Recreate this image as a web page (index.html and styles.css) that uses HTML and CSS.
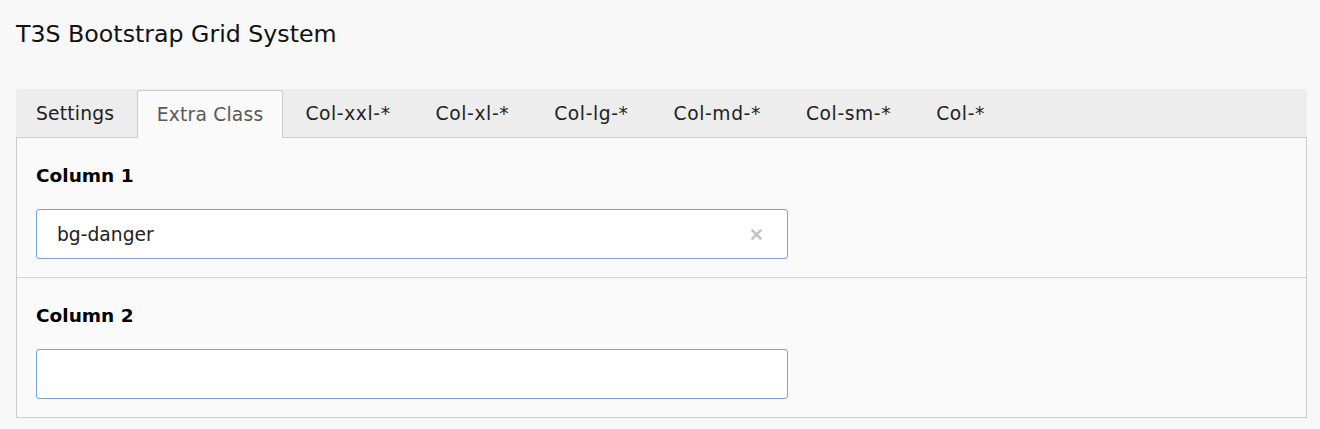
FILE: index.html
```html
<!DOCTYPE html>
<html>
<head>
<meta charset="utf-8">
<link rel="stylesheet" href="styles.css">
</head>
<body>
<div class="page">
  <h1 class="title">T3S Bootstrap Grid System</h1>
  <div class="tabs">
    <div class="tab">Settings</div>
    <div class="tab active">Extra Class</div>
    <div class="tab col">Col-xxl-*</div>
    <div class="tab col">Col-xl-*</div>
    <div class="tab col">Col-lg-*</div>
    <div class="tab col">Col-md-*</div>
    <div class="tab col">Col-sm-*</div>
    <div class="tab col">Col-*</div>
  </div>
  <div class="panel">
    <div class="section">
      <div class="label">Column 1</div>
      <div class="input">
        <span class="value">bg-danger</span>
        <svg class="clear" width="13" height="13" viewBox="0 0 12 12"><path d="M1.5 1.5 L10.5 10.5 M10.5 1.5 L1.5 10.5" stroke="#c4c4c4" stroke-width="2.6" fill="none"/></svg>
      </div>
    </div>
    <div class="section">
      <div class="label">Column 2</div>
      <div class="input"></div>
    </div>
  </div>
</div>
</body>
</html>
```

FILE: styles.css
```css
html, body {
  margin: 0;
  padding: 0;
  background: #f8f8f8;
}
body {
  font-family: "DejaVu Sans", Verdana, sans-serif;
  color: #1a1a1a;
}
.page {
  padding: 0 13px 0 16px;
}
.title {
  margin: 0;
  padding-top: 20px;
  height: 89px;
  box-sizing: border-box;
  font-size: 23.7px;
  font-weight: normal;
  line-height: 28px;
  color: #111;
}
.tabs {
  display: flex;
  background: #ededed;
  border-bottom: 1px solid #cccccc;
  height: 48px;
  border-radius: 3px 3px 0 0;
}
.tab {
  padding: 0 22px;
  font-size: 18.7px;
  line-height: 48px;
  color: #222;
  border: 1px solid transparent;
  border-bottom: none;
  margin-bottom: -1px;
  letter-spacing: 0.2px;
}
.tab.col {
  letter-spacing: 0.6px;
  padding: 0 21.5px;
}
.tab:first-child {
  padding: 0 22px 0 19px;
}
.tab.active {
  background: #fafafa;
  border-color: #cccccc;
  border-radius: 3px 3px 0 0;
  color: #595959;
  margin-top: 1px;
  line-height: 48px;
  padding: 0 18.5px;
}
.panel {
  background: #fafafa;
  border: 1px solid #cccccc;
  border-top: none;
}
.section {
  padding: 26px 19px 18px 19px;
}
.section + .section {
  border-top: 1px solid #d4d4d4;
}
.label {
  font-size: 18.5px;
  font-weight: bold;
  line-height: 24px;
  margin-bottom: 21px;
  color: #000;
}
.input {
  width: 752px;
  height: 50px;
  box-sizing: border-box;
  border: 1px solid #78a3dc;
  border-radius: 3px;
  background: #fff;
  display: flex;
  align-items: center;
  justify-content: space-between;
  padding: 0 24px 0 20px;
}
.value {
  font-size: 18.7px;
  color: #222;
}
.clear {
  display: block;
}
```
